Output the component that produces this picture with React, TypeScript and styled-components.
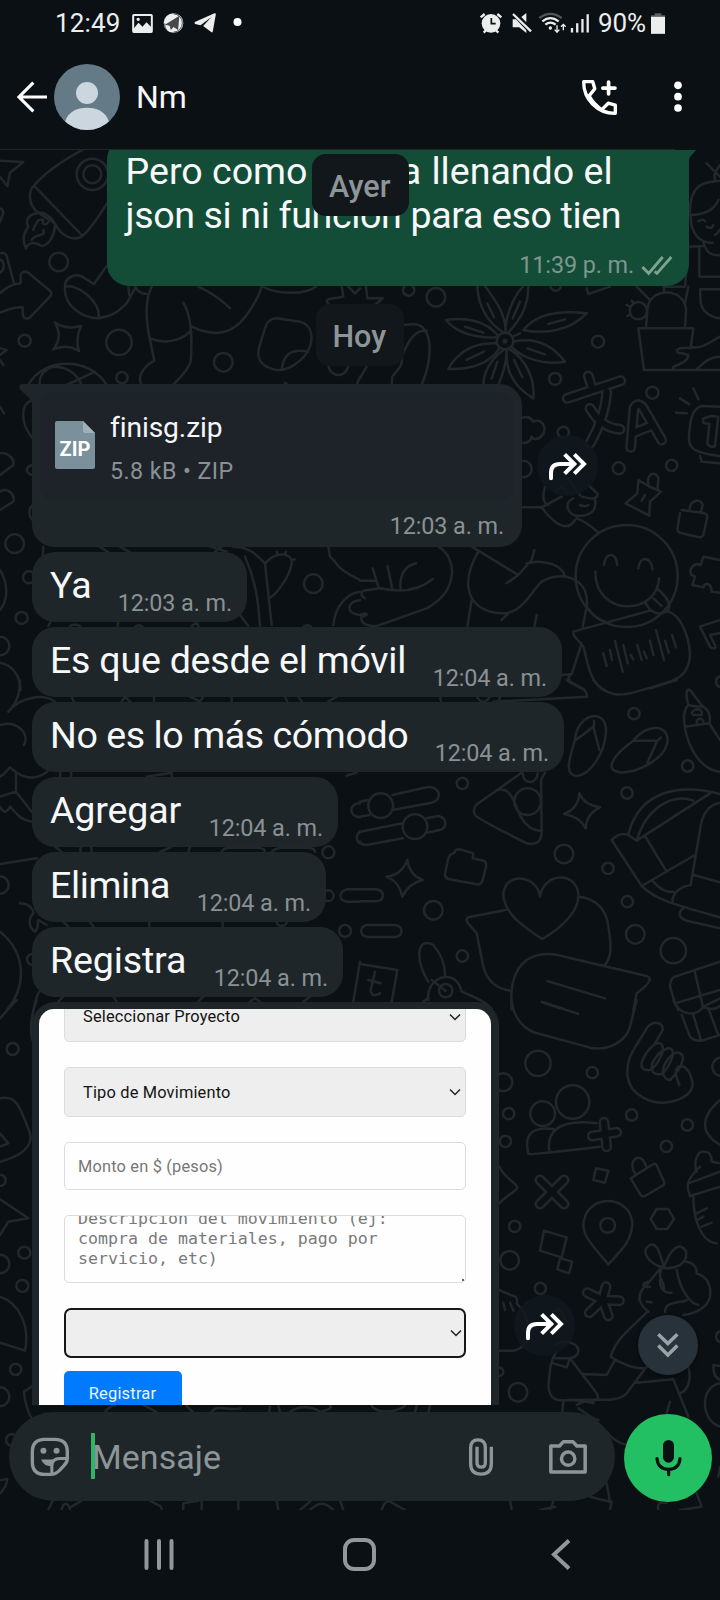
import React from 'react';
import styled, { createGlobalStyle } from 'styled-components';

const c = {
  bg: '#0b1014',
  bubble: '#1f2629',
  sent: '#144d37',
  doodle: '#22272b',
  text: '#f7f8fa',
  muted: '#8d9598',
  sub: '#8a9194',
};

const GlobalStyle = createGlobalStyle`
  * { box-sizing: border-box; }
  body { margin: 0; background: ${c.bg}; }
`;

const Screen = styled.div`
  width: 720px;
  height: 1600px;
  display: flex;
  flex-direction: column;
  background: ${c.bg};
  color: ${c.text};
  font-family: Roboto, sans-serif;
  overflow: hidden;
`;

const Svg = styled.svg<{ $ml?: number; $mr?: number }>`
  display: block;
  flex: none;
  overflow: visible;
  margin-left: ${(p) => p.$ml ?? 0}px;
  margin-right: ${(p) => p.$mr ?? 0}px;
`;

const StatusBar = styled.div`
  height: 46px;
  display: flex;
  align-items: center;
  justify-content: space-between;
  padding: 0 55px 0 55px;
  color: #eceeee;
`;

const StatusGroup = styled.div<{ $gap: number }>`
  display: flex;
  align-items: center;
  gap: ${(p) => p.$gap}px;
`;

const StatusText = styled.span<{ $spacing?: number }>`
  font-size: 26px;
  line-height: 46px;
  letter-spacing: ${(p) => p.$spacing ?? 0}px;
`;

const Header = styled.header`
  height: 103px;
  display: flex;
  align-items: center;
  padding: 0 38px 1px 17px;
`;

const Avatar = styled.div`
  width: 66px;
  height: 66px;
  margin-left: 7px;
  border-radius: 50%;
  overflow: hidden;
  background: #657a87;
`;

const ContactName = styled.h1`
  flex: 1;
  margin: 0 0 0 16px;
  font-size: 32px;
  font-weight: 400;
  line-height: 40px;
`;

const HeaderRule = styled.div`
  width: 675px;
  height: 1px;
  background: #1f2528;
`;

const Chat = styled.main`
  position: relative;
  height: 1360px;
  display: flex;
  flex-direction: column;
`;

const Wallpaper = styled.svg`
  position: absolute;
  inset: 0;
  width: 720px;
  height: 1360px;
`;

const MessageList = styled.div`
  position: relative;
  height: 1255px;
  padding: 0 31px 0 32px;
  display: flex;
  flex-direction: column;
  align-items: flex-start;
  overflow: hidden;
`;

const SentBubble = styled.div`
  position: relative;
  align-self: flex-end;
  width: 582.5px;
  height: 148px;
  margin-top: -12px;
  padding: 11px 17px 0 19px;
  border-radius: 22px 0 22px 22px;
  background: ${c.sent};
  flex: none;
`;

const SentTail = styled.svg`
  position: absolute;
  left: 582px;
  top: 0;
`;

const SentText = styled.p<{ $spacing: number }>`
  margin: 0;
  font-size: 37.6px;
  line-height: 44px;
  letter-spacing: ${(p) => p.$spacing}px;
  white-space: pre;
`;

const Spaced = styled.span`
  letter-spacing: 1px;
`;

const SentMeta = styled.div`
  display: flex;
  justify-content: flex-end;
  align-items: center;
  gap: 8px;
  margin-top: 14px;
`;

const Time = styled.span<{ $sent?: boolean }>`
  font-size: 23.4px;
  line-height: 28px;
  letter-spacing: -0.1px;
  color: ${(p) => (p.$sent ? '#7d978d' : c.sub)};
  white-space: nowrap;
`;

const DateChip = styled.div<{ $w: number; $floating?: boolean }>`
  width: ${(p) => p.$w}px;
  height: 61.5px;
  flex: none;
  display: flex;
  align-items: center;
  justify-content: center;
  padding: 3px 1px 0 0;
  border-radius: 14px;
  background: #12171b;
  color: ${c.muted};
  font-size: 30.5px;
  font-weight: 500;
  ${(p) =>
    p.$floating
      ? 'position: absolute; top: 4px; left: 312px;'
      : 'align-self: center; margin: 18px 1.5px 18.5px 0;'}
`;

const Row = styled.div<{ $gap: number }>`
  display: flex;
  align-items: center;
  gap: ${(p) => p.$gap}px;
  margin-bottom: 5px;
  flex: none;
`;

const FileBubble = styled.div`
  position: relative;
  width: 490px;
  height: 163px;
  padding: 8px;
  border-radius: 0 22px 22px 22px;
  background: ${c.bubble};
`;

const ReceivedTail = styled.svg`
  position: absolute;
  left: -13px;
  top: 0;
`;

const FileCard = styled.div`
  height: 108px;
  display: flex;
  align-items: center;
  padding: 0 15px;
  gap: 15px;
  border-radius: 14px;
  background: #1d2329;
`;

const FileIcon = styled.div`
  position: relative;
  width: 40px;
  height: 48px;
  margin-top: -2px;
`;

const FileKind = styled.span`
  position: absolute;
  left: 0;
  right: 0;
  top: 16px;
  text-align: center;
  font-size: 20px;
  line-height: 24px;
  font-weight: 700;
  color: #fff;
`;

const FileName = styled.div`
  font-size: 28.2px;
  line-height: 34px;
  letter-spacing: -0.1px;
  margin-top: 3px;
`;

const FileInfo = styled.div`
  font-size: 23.2px;
  line-height: 28px;
  letter-spacing: 0.45px;
  margin-top: 12px;
  color: ${c.sub};
`;

const FileTime = styled.div`
  display: flex;
  justify-content: flex-end;
  padding: 12px 10px 0 0;
`;

const ForwardButton = styled.div`
  width: 61px;
  height: 61px;
  flex: none;
  display: flex;
  align-items: center;
  justify-content: center;
  border-radius: 50%;
  background: rgba(16, 25, 31, 0.85);
`;

const TextBubble = styled.div<{ $w: number }>`
  width: ${(p) => p.$w}px;
  height: 70px;
  flex: none;
  display: flex;
  justify-content: space-between;
  margin-bottom: 5px;
  padding: 11px 15px 0 18px;
  border-radius: 23px;
  background: ${c.bubble};
`;

const BubbleText = styled.span<{ $spacing: number }>`
  font-size: 37.6px;
  line-height: 44px;
  letter-spacing: ${(p) => p.$spacing}px;
  white-space: nowrap;
`;

const BubbleTime = styled(Time)`
  padding-top: 26px;
`;

const PhotoBubble = styled.div`
  width: 467px;
  height: 647px;
  padding: 7px 8px 7px 7px;
  border-radius: 23px;
  background: ${c.bubble};
`;

const Photo = styled.div`
  height: 633px;
  padding: 0 25px;
  border-radius: 15px;
  background: #fefefe;
  color: #141414;
  overflow: hidden;
  letter-spacing: 0.17px;
`;

const SelectBox = styled.div<{ $focus?: boolean; $mt: number }>`
  height: 50px;
  margin-top: ${(p) => p.$mt}px;
  display: flex;
  align-items: center;
  justify-content: space-between;
  padding: 0 ${(p) => (p.$focus ? 2.5 : 4)}px 0 18px;
  border: ${(p) => (p.$focus ? '2.5px solid #17181a' : '1px solid #dcdcdc')};
  border-radius: ${(p) => (p.$focus ? 7 : 5)}px;
  background: #eee;
  font-size: 16.4px;
`;

const FormInput = styled.div`
  height: 48px;
  margin-top: 25px;
  padding-left: 13px;
  display: flex;
  align-items: center;
  border: 1px solid #dcdcdc;
  border-radius: 5px;
  font-size: 16.4px;
  color: #777;
`;

const FormArea = styled.div`
  position: relative;
  height: 68px;
  margin-top: 25px;
  border: 1px solid #dcdcdc;
  border-radius: 5px;
  overflow: hidden;
`;

const AreaText = styled.div`
  margin: -7.5px 0 0 13px;
  font-family: 'DejaVu Sans Mono', monospace;
  font-size: 16.6px;
  line-height: 20.3px;
  letter-spacing: 0;
  white-space: pre;
  color: #7a7a7a;
`;

const Grip = styled.i`
  position: absolute;
  right: 1px;
  bottom: 1px;
  width: 2px;
  height: 2px;
  background: #666;
`;

const SubmitButton = styled.div`
  width: 118px;
  height: 50px;
  margin-top: 13px;
  display: flex;
  align-items: flex-start;
  justify-content: center;
  padding: 13px 1px 0 0;
  border-radius: 5px;
  background: #007bff;
  color: #eaf4ff;
  font-size: 16.5px;
  line-height: 20px;
`;

const ScrollDown = styled.div`
  position: absolute;
  left: 637.5px;
  top: 1164.5px;
  width: 60px;
  height: 60px;
  display: flex;
  align-items: center;
  justify-content: center;
  border-radius: 50%;
  background: #28323a;
  box-shadow: 0 2px 5px rgba(0, 0, 0, 0.35);
`;

const Composer = styled.div`
  position: relative;
  display: flex;
  padding: 7px 8px 0 9px;
  gap: 9px;
`;

const InputPill = styled.div`
  width: 606px;
  height: 89px;
  display: flex;
  align-items: center;
  padding: 0 28.5px 0 21.5px;
  border-radius: 45px;
  background: ${c.bubble};
`;

const Caret = styled.i`
  width: 4px;
  height: 46px;
  margin: -2px -3px 0 22.5px;
  background: #2db763;
`;

const Placeholder = styled.span`
  flex: 1;
  font-size: 34px;
  line-height: 44px;
  letter-spacing: 0.05px;
  color: ${c.muted};
`;

const IconGroup = styled.div`
  display: flex;
  align-items: center;
  gap: 56px;
`;

const MicButton = styled.div`
  width: 88px;
  height: 88px;
  margin-top: 2px;
  display: flex;
  align-items: center;
  justify-content: center;
  border-radius: 50%;
  background: #23c063;
`;

const NavBar = styled.nav`
  height: 90px;
  display: flex;
  align-items: center;
  justify-content: space-between;
  padding: 0 150px 2px 143.5px;
`;

interface DoodleTile {
  x: number;
  y: number;
  lines: string;
  thick?: string;
  dots: [number, number, number][];
}

const doodles: DoodleTile[] = [
  {
    x: 0,
    y: 140,
    lines:
      'M0 62L70 66L30 98L22 138L0 110M250 28C190 60 130 100 95 145C80 180 100 210 120 222L165 250C180 285 215 305 245 290C280 260 300 220 322 190M105 140L245 285M110 220C85 225 75 240 85 260C70 280 65 300 78 325C90 300 110 310 125 318C150 315 165 280 165 255C160 235 130 210 110 220M100 270C110 240 120 235 130 240C125 255 135 260 150 240M95 300C105 280 140 290 130 270M0 205C15 210 10 220 0 245M0 340C15 335 20 345 22 355L42 430M0 358C15 365 15 390 0 398M0 460C20 440 45 432 62 430L62 405C65 395 75 392 85 398L150 452C156 460 155 465 150 470L90 532C80 540 68 535 68 520L68 502C45 500 20 510 0 518M195 440C195 410 230 395 255 415L282 432L320 378M195 440C230 430 300 480 297 535C250 535 190 500 195 440M297 535C330 530 350 520 380 490L405 445M385 440L388 465M405 440C415 458 430 462 440 462M165 548Q200 570 243 558Q225 600 237 633Q200 610 160 628Q190 590 165 548M455 440C435 480 435 530 450 600L463 662C430 680 410 710 425 735M450 595C490 612 540 605 570 575M550 488C575 530 578 590 572 665C560 700 530 720 520 735M575 560C650 595 700 580 740 525C765 490 780 460 785 438M595 440Q650 465 690 505M785 438C830 465 920 465 950 438M830 535L900 545C935 555 940 590 930 620C915 660 860 700 820 688C775 675 770 650 778 620L795 565C800 545 815 535 830 535M845 690C850 645 870 625 925 635M85 735C130 650 270 650 320 735M120 735C115 710 130 690 160 680C200 680 230 700 245 735M200 735L285 695M1025 438L1030 470L985 478C975 485 985 495 1000 500M1045 440L1065 460L1080 445M985 675C990 715 1040 715 1045 675M1080 710L1070 735M0 625L20 630L0 645M0 660L10 675M855 728L868 738',
    dots: [[277, 103, 47], [277, 103, 27], [176, 366, 28], [74, 602, 18], [357, 607, 38], [366, 713, 17], [670, 667, 28]],
  },
  {
    x: 360,
    y: 140,
    lines:
      'M18 440L22 475L68 475L45 495M352 438C355 500 380 545 430 578M375 438C405 480 437 520 437 575M437 575C435 530 460 470 490 438M505 438C505 500 480 540 445 578M490 570C530 520 600 510 680 520C630 570 560 585 490 570M565 552L615 538M408 592C350 595 290 580 258 540C320 530 380 545 412 585M315 560L370 578M410 610C340 605 290 640 265 687C330 690 390 670 418 625M320 660L372 635M430 630C390 660 370 700 370 735M440 630C440 670 430 700 415 735M412 665L395 715M440 630C435 690 460 740 520 775C525 720 500 660 450 628M462 660L487 712M460 605C530 590 580 620 615 665C560 675 490 660 455 620M502 625L555 643M382 490L402 532M480 485L458 535M458 590L480 580M680 445L685 462L750 440M858 565L862 510C865 440 975 440 978 510L975 565M835 565L1000 565L992 625M835 565L852 690L1080 690M810 500L800 495M808 525L802 528M822 490L815 482M830 440L870 480M985 440L975 490M912 440L912 455M1080 590C1050 605 1030 625 1000 622L960 625C945 630 950 640 965 640L985 645C985 660 970 670 940 680L940 690M1080 650C1050 650 1035 665 1010 688M990 225C985 120 1050 125 1080 122M990 225C1030 225 1060 215 1075 180M992 225C990 280 1020 310 1058 308M1040 70L1080 110M1065 120C1060 100 1070 90 1080 75M1015 243Q1028 235 1035 243M1040 260Q1055 270 1060 255M1065 285Q1075 280 1078 270M985 320L1030 318M1030 305Q1040 350 1080 345M1018 325L1018 410L1080 410M1020 448L1080 448M1020 448L1022 490C1030 520 1060 535 1080 535M985 320L975 440L910 440M95 735L97 710C110 690 130 680 125 650C150 590 170 570 200 572M185 735C220 650 220 555 160 552L130 555M0 715L20 680',
    dots: [[146, 450, 17], [228, 472, 28], [714, 605, 18], [585, 717, 18], [587, 436, 16], [435, 603, 25], [435, 603, 4], [835, 512, 26]],
  },
  {
    x: 360,
    y: 370,
    thick: 'M622 85L782 32M685 18L695 50M740 65C738 110 720 170 690 220M690 115C710 150 740 175 780 178M812 232L822 115Q832 95 848 112L905 210M822 188L880 165',
    lines:
      'M485 145C500 135 515 145 520 155C545 145 560 170 550 190C540 210 520 210 515 200C510 220 495 220 485 218M1080 110L1025 108C1000 115 990 140 987 200C985 235 1000 248 1080 258M1020 258L1025 275L1080 280M1030 158L1030 145Q1045 140 1055 138L1075 140M1030 158L1048 162L1042 220Q1050 235 1065 228L1075 140M1000 55L1015 88M960 85L988 103M948 128L980 130M835 330L865 348L903 365L870 395L868 437L797 400L832 370ZM865 345C860 310 885 300 895 325L893 355M855 375L845 392M965 420L1035 430Q1045 435 1040 450L1030 495Q1025 505 1010 500L960 488Q950 485 953 470L960 430M988 422C990 385 1025 385 1028 405L1022 428M732 585C735 545 770 545 772 585M835 595C840 555 875 560 877 598M706 605C705 740 890 740 897 625M855 695C870 730 900 740 925 720C935 700 920 680 890 655M880 685L905 708M1080 570L1030 560L1022 585C1000 575 985 600 995 615L1005 620L997 645L1030 652C1035 635 1055 640 1055 665L1080 668M640 785L870 722M925 725C960 735 985 790 990 850C990 920 950 930 870 955M640 785C635 800 665 815 672 835C685 900 700 950 740 965M485 412L545 412C580 460 620 490 645 450M545 412L605 380M555 350C545 385 550 400 565 405M640 385C610 395 620 440 660 438C700 435 710 415 705 390M660 405Q675 412 685 405M665 380C700 390 715 385 712 370L685 345M650 445C680 455 700 475 715 488M590 365C600 345 620 355 620 370M625 325L660 375M235 530C290 560 300 660 200 715L50 768M0 632L50 632M38 595L55 650M83 588L97 658M168 580C130 590 118 620 122 660M218 627C180 660 130 670 60 655L10 662C0 670 5 680 15 685M0 735C20 725 30 735 5 740C0 760 20 768 50 768M335 530L475 615L440 640M475 615L515 570L523 540M355 545C310 620 310 700 390 725C480 750 500 680 545 635C600 600 690 620 680 710L668 770M500 580C560 565 610 590 615 620M425 750L450 725M335 690L322 770M530 735L523 770M685 715C700 740 720 750 735 755M665 820L635 912L605 915M635 912C620 920 625 935 640 940L675 960M1080 750L1020 770L1050 830C1060 840 1070 835 1065 825L1050 795L1080 790M730 850L740 888M750 840L756 870M765 813L788 905M790 825L803 880M812 855L820 868M832 825L845 870M852 845L860 865M870 812L880 855M888 780L912 870M915 812L926 848M936 795L948 832',
    dots: [[877, 68, 18], [610, 187, 17], [776, 295, 18], [935, 286, 17], [490, 297, 25], [800, 618, 153], [1085, 935, 17]],
  },
  {
    x: 0,
    y: 370,
    lines:
      'M0 250C20 245 45 265 40 285L0 315M0 365C25 350 45 375 40 395L0 420M0 110L12 130M0 600C25 640 25 690 0 720M0 878C40 885 60 920 62 960M98 90C60 100 60 160 98 205M98 285C75 290 75 310 98 315M98 405C85 415 85 440 98 450M630 530L680 545M700 530C760 530 780 570 795 580L815 765M735 560C770 640 775 700 780 768M795 580C830 540 880 550 875 580C870 620 830 670 812 682M830 545L833 553M858 545L855 553M876 570L884 568M985 530L990 560L1005 575C1020 600 1050 615 1080 630M1000 765C1005 710 1040 670 1080 665M1080 690C1040 695 1035 730 1080 735M130 530L128 565M300 530L325 547M360 530L390 547M645 545L665 530M720 735L745 768M145 768L152 755M355 755L353 768M575 768L590 757L595 768M210 768Q225 760 240 768',
    dots: [[44, 521, 28], [65, 744, 18], [0, 828, 28], [87, 622, 18], [940, 641, 28], [922, 782, 16], [417, 782, 16]],
  },
  {
    x: 360,
    y: 680,
    lines:
      'M620 0C650 25 680 20 682 50L400 65M700 0C740 50 780 50 830 35L950 0M240 50L243 65M350 50Q370 80 390 50M420 50L415 65M645 180C650 100 740 80 738 155C735 220 690 285 650 288C610 285 630 230 645 180M645 182L700 140L718 210M702 122V140M820 182C860 130 930 130 922 190C910 240 830 280 780 277C730 270 760 225 820 182M820 182L892 182L862 248M892 182L903 172M975 140L1048 130C1055 90 1030 75 1015 80L985 75C970 90 970 120 975 140M985 75C975 35 980 25 990 30C1000 40 1010 60 1030 80M995 100C1000 85 1030 80 1025 105L1000 105M1010 130C1010 110 1030 115 1030 125M975 145C985 200 1020 270 1080 275M1048 130L1080 180M0 365L25 360M97 345L200 322C240 315 250 360 215 368L98 390M0 410L28 405M0 455L128 430M200 415L235 408C265 415 260 445 240 450L200 458M128 475L20 495Q5 495 0 485M485 278L355 370Q335 385 345 405Q350 415 500 490Q540 500 545 460L543 300L555 278M488 280C490 315 530 315 533 280M410 330C450 320 460 360 475 395C490 430 515 452 545 452M658 340Q672 375 720 382Q680 400 677 445Q660 410 612 402Q655 385 658 340M142 540Q148 585 188 600Q145 610 127 650Q118 605 80 590Q125 585 142 540M270 525Q285 520 287 510L300 508L340 520L338 535L370 542Q380 545 378 560L368 600Q362 615 350 613L265 597Q253 592 255 580L265 535ZM540 650C535 590 440 570 430 640C430 700 490 740 547 777C610 740 660 690 655 640C645 570 550 580 540 650M437 690L325 712C310 720 330 735 350 760L370 860C380 900 410 930 455 932M655 650C710 655 740 690 745 740C755 800 755 830 735 855M455 990C450 920 460 870 500 840C540 815 580 820 620 832L860 888C880 895 865 915 830 940L820 990M562 903L735 955M545 966L600 985M0 628L50 628C75 632 75 662 50 664L0 664M20 735H108C130 742 130 767 108 771H20C-2 765 -2 740 20 735M0 852L112 870L95 965M45 875L32 930Q35 955 60 940M25 900L62 910M205 905C160 830 175 770 220 795C250 830 255 860 255 885M205 960C195 890 290 860 305 935C330 945 370 960 395 985M215 900L257 932M205 955L190 965M805 462C840 330 960 310 1080 342M830 482C860 380 940 340 1000 362M755 480Q780 455 805 465L830 482L1050 340M755 480L845 618L1005 525M855 468L920 575M1080 368C1040 375 1025 410 1020 450L992 615C960 620 935 640 938 668M845 618C890 660 930 670 1080 712M880 605Q910 640 940 635M1000 585L1080 607M970 685C950 700 960 715 980 722L1080 745M1080 845L945 890Q930 895 930 920L945 970L1080 930M1003 870L1030 985M945 970L955 990',
    dots: [[822, 101, 17], [983, 258, 17], [307, 310, 17], [801, 339, 17], [612, 522, 28], [744, 565, 17], [802, 665, 17], [220, 691, 28], [826, 763, 28], [940, 812, 38], [307, 828, 17], [62, 377, 37], [165, 440, 37], [503, 365, 40], [257, 932, 20], [1085, 5, 17]],
  },
  {
    x: 0,
    y: 680,
    lines:
      'M25 95C60 60 60 20 60 0M25 95C60 50 130 40 165 65M0 135C50 120 90 160 72 195M0 290C20 280 25 265 30 262C60 290 100 310 145 272M48 280L48 335L95 395M0 350L48 335M0 380C10 400 20 400 30 380C50 400 60 420 95 425M0 552L110 535M60 670C90 670 100 690 100 700C80 720 90 745 105 755C120 740 110 720 115 720L140 735M0 755C80 820 80 920 20 990M1080 628H1040C1015 635 1015 660 1040 665H1080M1080 845L1060 965M1080 370C1045 370 1045 410 1080 412M1080 455C1065 465 1070 485 1080 490M100 990C105 970 108 950 118 935M215 50L222 66M365 65L375 50L390 65M462 50V65M570 50L600 65L610 50M695 50V65M855 50L862 65M895 50L905 65M985 65L1010 50M440 290L515 278V290M165 500L185 516M480 516L515 500M570 500L565 516M665 516Q670 503 690 503H775Q795 505 795 516M815 516Q825 503 850 503H925Q945 505 945 516M190 725L205 740M270 725L280 740M448 725V740M668 725V740M175 965L190 950M340 950L350 965M595 965L610 950M750 965L765 955L780 965M910 965L930 950M1040 287L1070 278',
    dots: [[0, 615, 26], [98, 838, 17], [985, 517, 18], [985, 647, 16], [1035, 753, 18], [845, 722, 16], [197, 284, 17], [258, 509, 17]],
  },
  {
    x: 0,
    y: 1000,
    lines:
      'M50 0L0 55M0 295C50 285 60 320 90 400C100 440 60 470 0 485M0 400L25 430L0 440M0 598L85 655L25 665L0 705M97 120C88 80 95 40 110 0',
    dots: [[38, 147, 18], [0, 541, 17], [73, 758, 18], [0, 792, 28], [67, 858, 18]],
  },
  {
    x: 360,
    y: 1000,
    thick: 'M732 367L740 440M697 408L770 397M540 540L612 612M612 540L540 612M728 900L738 860M728 900L778 902M728 900L745 948M728 900L688 938M728 900L682 878',
    lines:
      'M455 0C460 60 500 95 540 102L690 143C750 155 800 120 810 80L830 0M545 5L655 42M803 230C795 170 830 140 860 85C880 60 910 65 908 90L885 130M803 230C810 290 880 310 910 308C960 305 1000 280 998 250C990 210 975 195 955 200C940 215 950 230 958 255M848 205C830 190 880 120 900 130C925 140 890 200 870 210C860 212 850 208 848 205M880 217C860 190 910 140 930 145C955 155 920 210 905 222C890 225 885 222 880 217M915 232C895 210 930 155 955 158C985 165 960 210 930 240Q920 240 915 232M940 0C960 50 1010 50 1030 20L1080 -5M965 45L990 110Q1005 125 1025 122L1080 105M1000 45L1022 118M1045 25L1075 105M1030 20Q1060 35 1080 18M1080 300C1020 350 1020 400 1080 435M505 460C490 400 520 380 580 387M568 452C560 400 590 355 710 370M505 462Q510 465 720 440M708 505L745 512L735 548L700 540ZM552 692L620 712L605 772L540 752ZM600 775L637 785L627 820L592 808ZM890 627L925 627L942 657L922 687L890 687L872 657ZM812 535L880 492Q885 490 890 495L912 545Q915 552 908 557L855 588Q848 592 842 585ZM825 520C800 480 840 455 855 490L860 502M745 793C700 740 670 710 670 675C675 580 810 580 817 670C815 720 790 745 745 793M1010 515C1000 490 1010 450 1035 455C1050 455 1055 470 1055 485L1080 490M1020 500C990 530 985 545 985 550L1080 515M985 550Q980 560 990 588L1080 560M1000 590C1000 650 1020 725 1070 730M1010 640L1040 625M1015 658L1030 650M1025 680L1055 668M418 500C430 530 470 550 472 562C470 575 440 585 418 610M915 805C860 790 840 750 870 735C895 725 900 770 912 800C930 750 960 720 978 755C985 790 950 805 915 805M905 800L860 855M950 810C960 870 990 910 1015 915M980 785C1010 790 1010 810 1010 820C1040 830 1055 850 1050 890C1045 920 1010 940 970 945M860 855C840 870 838 890 838 900M905 805C890 840 915 840 912 870',
    dots: [[534, 190, 38], [697, 218, 17], [430, 247, 27], [446, 341, 17], [638, 306, 50], [548, 341, 37], [815, 345, 17], [982, 375, 17], [919, 439, 17], [436, 424, 17], [464, 679, 17], [449, 781, 28], [541, 865, 17], [743, 676, 22], [1085, 200, 28]],
  },
  {
    x: 360,
    y: 1280,
    lines:
      'M418 30C430 40 440 35 450 45C465 45 475 55 470 70C520 120 520 200 460 212L418 212M430 68L435 90M450 68L460 92M585 200C590 180 650 180 655 210C655 230 640 235 620 235L585 235M590 215C570 240 570 270 565 320C570 360 590 365 630 360L700 365M580 250L620 262L630 235L710 340Q720 360 705 360M670 282L740 285L765 240M630 360C720 355 770 370 800 340L860 260M752 230C770 170 820 140 862 95M752 230C780 250 820 265 850 265M828 308L940 298L985 410M985 260C995 300 985 330 960 340M650 375C670 360 680 365 700 370M655 385C680 400 700 420 715 420M740 455C760 480 780 490 795 493M610 365L607 395M930 365L920 400M865 5C840 10 850 25 870 20M840 40C835 65 845 80 865 95M860 65L875 67M900 0C900 30 915 40 935 38M915 95C915 60 970 70 980 60M580 95L600 85L620 130L600 135M1080 310C1020 320 1020 420 1080 440M1080 300C1060 290 1060 270 1060 255L1080 258M740 610L750 665L690 650M755 665L750 690M895 690C890 670 900 665 920 668M1010 640L1025 680L960 690M450 662L455 690M65 690C70 670 80 662 90 665L135 690M570 690L580 665M540 690L585 680M35 378C50 400 100 400 135 378M170 378L165 396M210 378L205 396M1075 590L1080 560',
    dots: [[474, 337, 28], [418, 275, 12], [1085, 170, 17]],
  },
  {
    x: 0,
    y: 1280,
    lines:
      'M0 50C60 70 90 140 75 212L0 188M98 318L72 335Q75 380 95 415M0 600L22 597Q20 620 0 640M315 396C330 378 340 375 345 375M430 375L470 396M560 378L578 396M635 396C650 370 690 395 720 385M810 380L808 396M835 378L840 396M870 396C900 375 940 380 960 396C980 390 1000 385 990 375M145 690L158 662M185 690C190 665 205 665 210 690M215 680L245 662M450 662C480 680 485 675 485 690M550 690L550 670L595 662M605 662V690M715 662V690M830 662L835 690M900 690L930 665M930 690C960 660 980 670 1000 690M1020 662L1030 690',
    dots: [[47, 268, 17], [0, 350, 28], [35, 480, 17]],
  },
];

const ChatWallpaper = () => (
  <Wallpaper viewBox="0 150 720 1360" fill="none" stroke={c.doodle} strokeLinecap="round" strokeLinejoin="round" aria-hidden>
    {doodles.map((t, i) => (
      <g key={i} transform={`translate(${t.x} ${t.y}) scale(0.33333)`} strokeWidth={7.5}>
        <path d={t.lines} />
        {t.dots.map(([x, y, r], j) => (
          <circle key={j} cx={x} cy={y} r={r} />
        ))}
        {t.thick && <path d={t.thick} strokeWidth={33} />}
        {t.thick && <path d={t.thick} strokeWidth={18} stroke={c.bg} />}
      </g>
    ))}
  </Wallpaper>
);

const ForwardIcon = () => (
  <Svg width="37" height="26" viewBox="565 248 111 78" fill="none" stroke="#fff" strokeWidth="12">
    <path d="M571 324V308Q571 281 598 281H640" strokeLinecap="round" />
    <path d="M612 252L641 281L612 310M641 252L670 281L641 310" />
  </Svg>
);

const SelectArrow = () => (
  <Svg width="12" height="8" viewBox="0 0 12 8" fill="none" stroke="#222" strokeWidth="1.5">
    <path d="M1 1.5L6 6.5L11 1.5" />
  </Svg>
);

const messages = [
  { text: 'Ya', time: '12:03 a. m.', w: 215, spacing: 0 },
  { text: 'Es que desde el móvil', time: '12:04 a. m.', w: 530, spacing: -0.25 },
  { text: 'No es lo más cómodo', time: '12:04 a. m.', w: 532, spacing: -0.43 },
  { text: 'Agregar', time: '12:04 a. m.', w: 306, spacing: -0.15 },
  { text: 'Elimina', time: '12:04 a. m.', w: 294, spacing: -0.4 },
  { text: 'Registra', time: '12:04 a. m.', w: 311, spacing: -0.15 },
];

const Status = () => (
  <StatusBar>
    <StatusGroup $gap={11}>
      <StatusText $spacing={0.15}>12:49</StatusText>
      <Svg width="21" height="19" viewBox="397 40 62 57">
        <path fill="#eceeee" fillRule="evenodd" d="M402 40H454Q459 40 459 45V92Q459 97 454 97H402Q397 97 397 92V45Q397 40 402 40ZM403 46V82L416 66L428 78L440 65L453 78V46ZM415 51a5 5 0 1 1 0 10a5 5 0 0 1 0-10Z" />
      </Svg>
      <Svg $ml={-1} width="21" height="22" viewBox="488 34 64 66">
        <circle cx="520" cy="67" r="30" fill="#eceeee" />
        <path d="M494 72L538 45L534 88L520 79L512 88L508 75Z" fill="#45494c" />
        <path d="M520 39a28 28 0 0 1 27 28a28 28 0 0 1-27 28M500 90a30 30 0 0 1-7-22" fill="none" stroke="#303538" strokeWidth="2.5" />
      </Svg>
      <Svg $ml={-1} width="22" height="20" viewBox="581 40 65 60">
        <path fill="#eceeee" d="M583 67Q580 70 584 73L600 77L633 52L608 79L632 97Q636 100 637 95L646 44Q646 40 642 41Z" />
      </Svg>
      <Svg width="20" height="10" viewBox="0 0 20 10">
        <circle cx="10.500" cy="4" r="4" fill="#fff" />
      </Svg>
    </StatusGroup>
    <StatusGroup $gap={7}>
      <Svg width="22" height="20" viewBox="359 36 66 60">
        <circle cx="392" cy="67" r="28" fill="#eceeee" />
        <path d="M361 49L373 39M423 49L411 39M370 95L378 87M414 95L406 87" stroke="#eceeee" strokeWidth="7" />
        <path d="M393 51V68H406" fill="none" stroke={c.bg} strokeWidth="5" />
      </Svg>
      <Svg $ml={3} width="20" height="20" viewBox="454 36 60 60">
        <path fill="#eceeee" d="M456 55H466L497 88V96L476 79H456ZM482 48L497 36V64Z" />
        <path d="M457 39L511 91" stroke="#eceeee" strokeWidth="7" />
      </Svg>
      <Svg width="27" height="20" viewBox="537 36 81 60" fill="none">
        <path d="M538 51Q571 26 605 51" stroke="#50565a" strokeWidth="7" />
        <path d="M547 61Q571 42 596 61M556 71Q571 59 587 71" stroke="#eceeee" strokeWidth="7" />
        <circle cx="571" cy="81" r="5" fill="#eceeee" />
        <path d="M591 73V92M584 86L591 94L598 86M610 88V72M603 77L610 70L617 77" stroke="#eceeee" strokeWidth="4" />
      </Svg>
      <Svg $ml={-2} width="18" height="19" viewBox="635 40 55 57">
        <path d="M638 82V96M654 68V96M670 55V96M686 40V96" stroke="#eceeee" strokeWidth="7" />
      </Svg>
      <StatusText as={StatusPercent}>90%</StatusText>
      <Svg $ml={-2} width="14" height="21" viewBox="873 36 42 62">
        <path d="M884 36H904V42H915V50H873V42H884Z" fill="#585d60" />
        <path d="M873 47H915V98H873Z" fill="#eceeee" />
      </Svg>
    </StatusGroup>
  </StatusBar>
);

const StatusPercent = styled.span`
  margin-left: 2px;
  letter-spacing: -0.05px;
`;

export default function App() {
  return (
    <>
      <GlobalStyle />
      <Screen>
        <Status />
        <Header>
          <Svg width="30" height="30" viewBox="50 248 90 90" fill="none" stroke="#fff" strokeWidth="9.5">
            <path d="M140 293H56M99 250L56 293L99 336" />
          </Svg>
          <Avatar>
            <Svg width="66" height="66" viewBox="162 192 198 198" fill="#ccd6df">
              <circle cx="261" cy="279" r="33" />
              <path d="M195 365C205 335 230 323 261 323C292 323 317 335 327 365L300 400H222Z" />
            </Svg>
          </Avatar>
          <ContactName>Nm</ContactName>
          <Svg width="35" height="35" viewBox="667 240 104 104" fill="none" stroke="#fff" strokeWidth="10">
            <path strokeLinejoin="round" d="M672 245H699L705 266L688 287C697 304 710 318 726 328L745 309L766 315V339C714 340 671 297 672 245Z" />
            <path strokeLinecap="round" strokeWidth="11" d="M746 246V281M729 264H765" />
          </Svg>
          <Svg $ml={57} width="8" height="32" viewBox="944 246 24 94" fill="#fff">
            <circle cx="956" cy="258" r="11.5" />
            <circle cx="956" cy="292" r="11.5" />
            <circle cx="956" cy="326" r="11.5" />
          </Svg>
        </Header>
        <HeaderRule />
        <Chat>
          <ChatWallpaper />
          <MessageList>
            <SentBubble>
              <SentTail width="14" height="24" viewBox="0 0 14 24" fill={c.sent}>
                <path d="M0 0H14L7 12L1 19Q0 20 0 24Z" />
              </SentTail>
              <SentText $spacing={0}>
                Pero como <Spaced>se iba</Spaced> llenando el
              </SentText>
              <SentText $spacing={-0.36}>json si ni función para eso tien</SentText>
              <SentMeta>
                <Time $sent>11:39 p. m.</Time>
                <Svg width="30" height="19" viewBox="846 342 90 57" fill="none" stroke="#7fa392" strokeWidth="8.5">
                  <path d="M847 375L866 394L908 345M884 388L891 394L934 345" />
                </Svg>
              </SentMeta>
            </SentBubble>
            <DateChip $w={87.5}>Hoy</DateChip>
            <Row $gap={15}>
              <FileBubble>
                <ReceivedTail width="14" height="20" viewBox="0 0 14 20" fill={c.bubble}>
                  <path d="M14 0H3Q-1 1 .5 5L13 17V20H14Z" />
                </ReceivedTail>
                <FileCard>
                  <FileIcon>
                    <Svg width="40" height="48" viewBox="0 0 40 48">
                      <path d="M2 0H28L40 12V46Q40 48 38 48H2Q0 48 0 46V2Q0 0 2 0Z" fill="#7a909a" />
                      <path d="M28 0L40 12H30Q28 12 28 10Z" fill="#a1b1b8" />
                    </Svg>
                    <FileKind>ZIP</FileKind>
                  </FileIcon>
                  <div>
                    <FileName>finisg.zip</FileName>
                    <FileInfo>5.8 kB • ZIP</FileInfo>
                  </div>
                </FileCard>
                <FileTime>
                  <Time>12:03 a. m.</Time>
                </FileTime>
              </FileBubble>
              <ForwardButton>
                <ForwardIcon />
              </ForwardButton>
            </Row>
            {messages.map((m) => (
              <TextBubble key={m.text} $w={m.w}>
                <BubbleText $spacing={m.spacing}>{m.text}</BubbleText>
                <BubbleTime>{m.time}</BubbleTime>
              </TextBubble>
            ))}
            <Row $gap={15}>
              <PhotoBubble>
                <Photo>
                  <SelectBox $mt={-17.5}>
                    Seleccionar Proyecto
                    <SelectArrow />
                  </SelectBox>
                  <SelectBox $mt={25.5}>
                    Tipo de Movimiento
                    <SelectArrow />
                  </SelectBox>
                  <FormInput>Monto en $ (pesos)</FormInput>
                  <FormArea>
                    <AreaText>{'Descripción del movimiento (ej:\ncompra de materiales, pago por\nservicio, etc)'}</AreaText>
                    <Grip />
                  </FormArea>
                  <SelectBox $mt={24.5} $focus>
                    <span />
                    <SelectArrow />
                  </SelectBox>
                  <SubmitButton>Registrar</SubmitButton>
                </Photo>
              </PhotoBubble>
              <ForwardButton>
                <ForwardIcon />
              </ForwardButton>
            </Row>
            <DateChip $w={96.5} $floating>
              Ayer
            </DateChip>
          </MessageList>
          <ScrollDown>
            <Svg width="22" height="24" viewBox="890 164 65 73" fill="none" stroke="#99a2a7" strokeWidth="10.5">
              <path d="M893 168L922 196L951 168M893 202L922 231L951 202" />
            </Svg>
          </ScrollDown>
          <Composer>
            <InputPill>
              <Svg width="38" height="38" viewBox="92 476 113 113" fill="none" stroke={c.muted} strokeWidth="10">
                <path d="M200 536V517Q200 480 163 480H133Q96 480 96 517V547Q96 584 133 584H150Q165 584 176 573L190 558Q200 548 200 536Z" />
                <path d="M198 537H178Q154 537 154 560V583" strokeWidth="9" />
                <circle cx="129" cy="514" r="9" fill={c.muted} stroke="none" />
                <circle cx="168" cy="514" r="9" fill={c.muted} stroke="none" />
                <path d="M122 540H164L152 560Q130 560 122 540Z" fill={c.muted} stroke="none" />
              </Svg>
              <Caret />
              <Placeholder>Mensaje</Placeholder>
              <IconGroup>
                <Svg width="24" height="38" viewBox="327 473 72 113" fill="none" stroke={c.muted} strokeWidth="10">
                  <path d="M394 499V550Q394 581 363 581Q332 581 332 550V502Q332 478 354 478Q376 478 376 502V547Q376 560 364 560Q351 560 351 547V499" />
                </Svg>
                <Svg width="38" height="34" viewBox="569 482 113 102" fill="none" stroke={c.muted} strokeWidth="10.5">
                  <path strokeLinejoin="round" d="M574 500H600L612 487H640L652 500H677V578H574Z" />
                  <circle cx="626" cy="538" r="20" />
                </Svg>
              </IconGroup>
            </InputPill>
            <MicButton>
              <Svg width="27" height="36" viewBox="886 478 79 108" fill="none" stroke={c.bg} strokeWidth="9.5">
                <rect x="909" y="478" width="33" height="68" rx="16.5" fill={c.bg} stroke="none" />
                <path strokeLinecap="round" d="M891 534Q894 566 926 566Q957 566 960 534M926 566V582" />
              </Svg>
            </MicButton>
          </Composer>
        </Chat>
        <NavBar>
          <Svg width="30" height="31" viewBox="0 0 30 31" stroke="#939799" strokeWidth="4" strokeLinecap="round">
            <path d="M2.5 2V29M15 2V29M27.5 2V29" />
          </Svg>
          <Svg $mr={6} width="33" height="33" viewBox="0 0 33 33" fill="none" stroke="#939799" strokeWidth="4">
            <rect x="2" y="2" width="29" height="29" rx="9" />
          </Svg>
          <Svg width="19" height="31" viewBox="0 0 19 31" fill="none" stroke="#939799" strokeWidth="4">
            <path d="M18 1.5L3 15.5L18 29.5" />
          </Svg>
        </NavBar>
      </Screen>
    </>
  );
}
